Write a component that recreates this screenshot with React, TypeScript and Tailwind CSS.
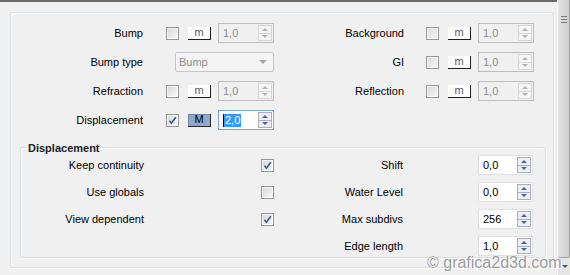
import clsx from 'clsx'

type SpinState = 'disabled' | 'enabled' | 'focused'

function Checkbox({ checked = false }: { checked?: boolean }) {
  return (
    <div className="flex h-[13px] w-[13px] shrink-0 items-center justify-center border border-[#979797] bg-gradient-to-br from-[#d6d8dc] to-[#f8f8f8] shadow-[inset_1px_1px_0_#f4f4f4,inset_-1px_-1px_0_#fff]">
      {checked && (
        <svg width="9" height="9" viewBox="0 0 9 9">
          <path d="M1.4 4.6 L3.4 7.2 L7.8 1.2" fill="none" stroke="#3b4e8c" strokeWidth="1.5" />
        </svg>
      )}
    </div>
  )
}

function MapButton({ active = false }: { active?: boolean }) {
  return (
    <div
      className={clsx(
        'flex h-[13px] w-[23px] shrink-0 items-center justify-center border-r border-b leading-none',
        active
          ? 'border-[#2a2a2a] bg-[#8fa8cc] text-black shadow-[inset_1px_1px_0_#6f86a8]'
          : 'border-[#1e1e1e] bg-[#fbfbfb] text-[#5f5f5f] shadow-[inset_1px_1px_0_#fff]'
      )}
    >
      {active ? 'M' : 'm'}
    </div>
  )
}

function Arrows({ enabled }: { enabled: boolean }) {
  const tri = enabled ? 'border-b-[#4c6196]' : 'border-b-[#b2b2b2]'
  const triDown = enabled ? 'border-t-[#4c6196]' : 'border-t-[#b2b2b2]'
  return (
    <div
      className={clsx(
        'mr-[1px] flex h-[16px] w-[14px] flex-col border',
        enabled ? 'border-[#a9b0bb] bg-[#eceef1]' : 'border-[#d6d6d6] bg-[#f5f5f5]'
      )}
    >
      <div className={clsx('flex flex-1 items-center justify-center border-b', enabled ? 'border-[#a9b0bb]' : 'border-[#d6d6d6]')}>
        <div className={clsx('h-0 w-0 border-x-[3px] border-b-[3px] border-x-transparent', tri)} />
      </div>
      <div className="flex flex-1 items-center justify-center">
        <div className={clsx('h-0 w-0 border-x-[3px] border-t-[3px] border-x-transparent', triDown)} />
      </div>
    </div>
  )
}

function Spinner({ value, state, width = 'w-[56px]' }: { value: string; state: SpinState; width?: string }) {
  return (
    <div
      className={clsx(
        'flex h-[20px] shrink-0 items-center border',
        width,
        state === 'disabled' && 'border-[#bdbdbd] bg-[#f0f0f0] text-[#8c8c8c]',
        state === 'enabled' && 'border-[#e0e0e0] bg-white text-black',
        state === 'focused' && 'border-[#7ba6da] bg-white text-black'
      )}
    >
      <div className="flex flex-1 items-center pl-[4px]">
        {state === 'focused' ? (
          <>
            <span className="h-[13px] w-[1px] bg-black" />
            <span className="bg-[#3399ff] px-[1px] leading-[13px] text-white">{value}</span>
          </>
        ) : (
          value
        )}
      </div>
      <Arrows enabled={state !== 'disabled'} />
    </div>
  )
}

const leftRows = [
  { label: 'Bump', type: 'map' },
  { label: 'Bump type', type: 'select' },
  { label: 'Refraction', type: 'map' },
  { label: 'Displacement', type: 'active' },
]

const rightRows = ['Background', 'GI', 'Reflection']

const dispLeft = [
  { label: 'Keep continuity', checked: true },
  { label: 'Use globals', checked: false },
  { label: 'View dependent', checked: true },
  null,
]

const dispRight = [
  { label: 'Shift', value: '0,0' },
  { label: 'Water Level', value: '0,0' },
  { label: 'Max subdivs', value: '256' },
  { label: 'Edge length', value: '1,0' },
]

export default function App() {
  return (
    <div className="relative flex h-[275px] w-[570px] overflow-hidden bg-[#f0f0f0] font-['Liberation_Sans',Arial,sans-serif] text-[11px] text-black">
      {/* Main panel */}
      <div className="flex w-[557px] flex-col">
        <div className="h-[2px] bg-[#6b6b6b]" />
        <div className="pl-[10px] pt-[10px]">
          <div className="h-[256px] w-[544px] rounded-[3px] border border-[#d5dfe5] shadow-[inset_1px_1px_0_#fff,1px_1px_0_#fff]">
            {/* Top rows */}
            <div className="flex flex-col gap-[9px] pt-[10px]">
              {leftRows.map((row, i) => (
                <div key={row.label} className="flex h-[20px] items-center">
                  <div className="w-[132px] text-right">{row.label}</div>
                  {row.type === 'select' ? (
                    <div className="ml-[32px] flex h-[20px] w-[99px] items-center justify-between rounded-[2px] border border-[#c6c6c6] bg-[#f4f4f4] pl-[3px] pr-[6px] text-[#8c8c8c]">
                      Bump
                      <div className="h-0 w-0 border-x-[4px] border-t-[4px] border-x-transparent border-t-[#a8a8a8]" />
                    </div>
                  ) : (
                    <>
                      <div className="ml-[23px]">
                        <Checkbox checked={row.type === 'active'} />
                      </div>
                      <div className="ml-[9px]">
                        <MapButton active={row.type === 'active'} />
                      </div>
                      <div className="ml-[7px]">
                        <Spinner value={row.type === 'active' ? '2,0' : '1,0'} state={row.type === 'active' ? 'focused' : 'disabled'} />
                      </div>
                    </>
                  )}
                  {rightRows[i] && (
                    <>
                      <div className="w-[130px] text-right">{rightRows[i]}</div>
                      <div className="ml-[22px]">
                        <Checkbox />
                      </div>
                      <div className="ml-[9px]">
                        <MapButton />
                      </div>
                      <div className="ml-[7px]">
                        <Spinner value="1,0" state="disabled" />
                      </div>
                    </>
                  )}
                </div>
              ))}
            </div>

            {/* Displacement group */}
            <div className="relative ml-[9px] mt-[17px] h-[111px] w-[526px] rounded-[3px] border border-[#d5dfe5] shadow-[inset_1px_1px_0_#fff,1px_1px_0_#fff]">
              <div className="absolute -top-[8px] left-[6px] bg-[#f0f0f0] px-[1px] font-bold text-[#222]">Displacement</div>
              <div className="flex flex-col gap-[7px] pt-[7px]">
                {dispRight.map((r, i) => (
                  <div key={r.label} className="flex h-[20px] items-center">
                    <div className="w-[123px] text-right">{dispLeft[i]?.label}</div>
                    <div className="ml-[117px] w-[13px]">{dispLeft[i] && <Checkbox checked={dispLeft[i]!.checked} />}</div>
                    <div className="w-[129px] text-right">{r.label}</div>
                    <div className="ml-[75px]">
                      <Spinner value={r.value} state="enabled" width="w-[55px]" />
                    </div>
                  </div>
                ))}
              </div>
            </div>
          </div>
        </div>
      </div>

      {/* Scrollbar */}
      <div className="flex w-[13px] flex-col border-l border-[#fafafa] bg-[#e6e6e6]">
        <div className="flex h-[258px] flex-col items-center rounded-b-[2px] border-r border-b border-[#a4a4a4] bg-gradient-to-r from-[#e4e4e4] to-[#cdcdcd] pt-[16px]">
          <div className="flex flex-col gap-[2px]">
            <div className="h-[1px] w-[6px] bg-[#7a7a7a]" />
            <div className="h-[1px] w-[6px] bg-[#7a7a7a]" />
            <div className="h-[1px] w-[6px] bg-[#7a7a7a]" />
          </div>
        </div>
        <div className="flex flex-1 items-center justify-end pr-[2px]">
          <div className="h-0 w-0 border-x-[3px] border-t-[3px] border-x-transparent border-t-[#555]" />
        </div>
      </div>

      {/* Watermark */}
      <div className="absolute left-[427px] top-[254px] font-['Liberation_Sans',Arial,sans-serif] text-[16px] leading-[18px] text-[#9a9a9a] [text-shadow:1px_1px_0_#fff,-1px_0_0_#fff]">
        © grafica2d3d.com
      </div>
    </div>
  )
}
